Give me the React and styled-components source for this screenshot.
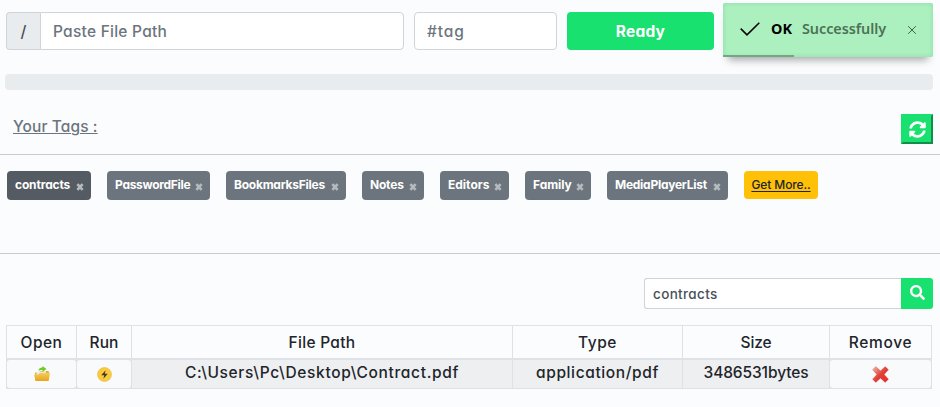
import React from 'react';
import styled, { createGlobalStyle, css } from 'styled-components';
import { FaSyncAlt, FaSearch } from 'react-icons/fa';

const Global = createGlobalStyle`
  * { box-sizing: border-box; }
  body {
    margin: 0;
    background: #fbfcfe;
    color: #212529;
    font-family: Inter, "Noto Sans", sans-serif;
    font-weight: 500;
    font-size: 15.5px;
    font-feature-settings: "cv11" 1;
  }
  button, input { font: inherit; font-feature-settings: inherit; }
`;

const tracked = css`letter-spacing: ${p => p.$track || 0}px;`;

const Page = styled.main`
  width: 940px;
  height: 407px;
  overflow: hidden;
`;
const TopBar = styled.header`
  display: flex;
  height: 74px;
  padding: 12px 7px 0 6px;
  align-items: flex-start;
`;
const PathGroup = styled.div`
  display: flex;
  width: 398px;
  height: 38px;
  margin-right: 10px;
`;
const Prefix = styled.span`
  display: flex;
  width: 34px;
  align-items: center;
  justify-content: center;
  background: #e9ecef;
  border: 1px solid #ced4da;
  border-right: 0;
  border-radius: 4px 0 0 4px;
  color: #495057;
  font-size: 16px;
`;
const Field = styled.input`
  flex: ${p => (p.$width ? 'none' : 1)};
  width: ${p => (p.$width ? `${p.$width}px` : 'auto')};
  min-width: 0;
  height: 38px;
  padding: 0 12px;
  border: 1px solid #ced4da;
  border-radius: ${p => (p.$joined ? '0 4px 4px 0' : '4px')};
  background: #fff;
  outline: 0;
  ${tracked}
  &::placeholder { color: #6c757d; opacity: 1; }
`;
const ReadyButton = styled.button`
  width: 147px;
  height: 38px;
  margin: 0 9px 0 10px;
  border: 0;
  border-radius: 4px;
  background: #19e170;
  color: #fff;
  font-weight: 700;
  letter-spacing: 0.2px;
`;
const Toast = styled.div`
  display: flex;
  position: relative;
  width: 210px;
  height: 54px;
  margin-top: -9px;
  padding: 0 16px 2px 17px;
  align-items: center;
  overflow: visible;
  border-radius: 2px;
  background: #acf0bf;
  box-shadow: inset 0 0 5px rgba(40, 150, 80, 0.22), 0 8px 8px -5px rgba(0, 0, 0, 0.34);
  font-family: "Noto Sans", sans-serif;
  font-size: 14.4px;
  &::after {
    content: "";
    position: absolute;
    left: 0;
    bottom: 0;
    width: 71px;
    height: 2px;
    background: #76a583;
  }
`;
const ToastTitle = styled.strong`
  width: 31px;
  margin: -2px 0 0 11px;
  color: #000;
  font-weight: 700;
`;
const ToastText = styled.span`
  flex: 1;
  margin-top: -2px;
  color: #4c7257;
  font-weight: 600;
  letter-spacing: -0.05px;
`;
const Progress = styled.div`
  height: 16px;
  margin: 0 7px 0 5px;
  border-radius: 4px;
  background: #e9ecef;
`;
const TagsHeader = styled.section`
  display: flex;
  height: 65px;
  padding: 24px 7px 0 13px;
  justify-content: space-between;
  border-bottom: 1px solid #c8cacc;
`;
const TagsTitle = styled.span`
  height: 25px;
  padding-top: 3px;
  color: #6c757d;
  line-height: 20px;
  letter-spacing: 0.1px;
  text-decoration: underline;
  text-decoration-thickness: 1px;
  text-underline-offset: 1px;
`;
const RefreshButton = styled.button`
  display: flex;
  width: 32px;
  height: 30px;
  padding: 0;
  align-items: center;
  justify-content: center;
  border: 2px solid;
  border-color: #19e170 #128c49 #128c49 #19e170;
  background: #19e170;
  color: #fff;
`;
const TagList = styled.section`
  display: flex;
  height: 99px;
  padding: 16px 7px 0;
  align-items: flex-start;
  gap: 16px;
  border-bottom: 1px solid #c8cacc;
`;
const Tag = styled.span`
  display: flex;
  width: ${p => p.$width}px;
  height: 29px;
  padding: 0 7px 2px 8px;
  align-items: center;
  justify-content: space-between;
  border-radius: 4px;
  background: ${p => (p.$active ? '#545b62' : '#6c757d')};
  color: #fff;
  font-size: 12px;
  font-weight: 700;
  white-space: nowrap;
  ${tracked}
`;
const MoreTag = styled.a`
  display: flex;
  width: 74px;
  height: 28px;
  padding-bottom: 1px;
  align-items: center;
  justify-content: center;
  border-radius: 4px;
  background: #ffc107;
  color: #212529;
  font-size: 12px;
  letter-spacing: -0.1px;
  text-decoration: underline;
  text-decoration-thickness: 1px;
  text-underline-offset: 2px;
`;
const TagClose = styled.svg`
  width: 8px;
  height: 8px;
  margin-top: 5px;
`;
const SearchRow = styled.form`
  display: flex;
  height: 71px;
  padding: 24px 7px 0;
  justify-content: flex-end;
`;
const SearchInput = styled.input`
  width: 257px;
  height: 31px;
  padding: 0 8px;
  border: 1px solid #ced4da;
  border-right: 0;
  border-radius: 3px 0 0 3px;
  background: #fff;
  color: #495057;
  font-size: 13.5px;
  letter-spacing: 0.35px;
  outline: 0;
`;
const SearchButton = styled.button`
  display: flex;
  width: 32px;
  height: 31px;
  padding: 0 0 2px;
  align-items: center;
  justify-content: center;
  border: 0;
  border-radius: 0 3px 3px 0;
  background: #19e170;
  color: #fff;
`;
const Table = styled.div`
  width: 926px;
  margin-left: 6px;
  padding: 1px;
  background: #dee2e6;
`;
const Row = styled.div`
  display: grid;
  grid-template-columns: 69px 54px 380px 169px 146px 101px;
  column-gap: 1px;
  height: ${p => p.$height}px;
  margin-bottom: ${p => p.$rule || 0}px;
`;
const Cell = styled.div`
  display: flex;
  padding-top: ${p => p.$shift || 0}px;
  padding-bottom: ${p => p.$lift || 0}px;
  align-items: center;
  justify-content: center;
  background: ${p => p.$fill || '#fbfcfe'};
  border-radius: ${p => (p.$round ? '3px' : 0)};
  white-space: nowrap;
  ${tracked}
`;

const CloseMark = () => (
  <TagClose viewBox="0 0 7 7">
    <path d="M1.2 1 5.8 6M5.8 1 1.2 6" stroke="#b5babe" strokeWidth="2.3" />
  </TagClose>
);
const CheckIcon = () => (
  <svg width="20" height="14" viewBox="0 0 20 14" fill="none">
    <path d="M.7 6.6 7 12.9 19.3.7" stroke="#000" strokeWidth="1.5" />
  </svg>
);
const DismissIcon = () => (
  <svg width="10" height="10" viewBox="0 0 10 10">
    <path d="M1.2 2.2 8.8 9.8M8.8 2.2 1.2 9.8" stroke="#3f6349" strokeWidth="1" />
  </svg>
);
const FolderIcon = () => (
  <svg width="16" height="16" viewBox="0 0 16 16">
    <defs>
      <linearGradient id="folder" x2="0" y2="1">
        <stop stopColor="#f8cc58" /><stop offset="1" stopColor="#e4a51d" />
      </linearGradient>
    </defs>
    <path d="M1.2 6.2h4l1-1.2h8.5v9H1.2z" fill="#d8a73a" />
    <path d="m2.3 6 9.5-1 .9 3.5-10 1z" fill="#e9eef2" />
    <path d="M1.4 15 .2 8.6h4l1.7-1.8H16l-1.4 8.2z" fill="url(#folder)" />
    <path d="M4.2 4.8C5 1.8 7 1.3 8.5 1.5V0l4 2.9-4 3V4C7 3.7 5.5 4 4.2 4.8z" fill="#73cc26" />
  </svg>
);
const RunIcon = () => (
  <svg width="15" height="15" viewBox="0 0 15 15">
    <circle cx="7.5" cy="7.5" r="7" fill="#fdca38" stroke="#dfba54" strokeWidth=".6" />
    <path d="M8.6 3.2 4.2 8.2h3L6.4 11.8 10.8 6.8H7.8z" fill="#3e3b38" />
  </svg>
);
const RemoveIcon = () => (
  <svg width="17" height="17" viewBox="0 0 17 17">
    <defs>
      <linearGradient id="cross" x2="1" y2="1">
        <stop stopColor="#f4beb3" /><stop offset=".5" stopColor="#df4038" /><stop offset="1" stopColor="#ee2929" />
      </linearGradient>
    </defs>
    <path d="m3.8.5 4.7 4.2L13.2.5l3.3 3.2-4.3 4.7 4.3 4.8-3.3 3.2-4.7-4.2-4.7 4.2-3.3-3.2 4.3-4.8L.5 3.7z"
      fill="url(#cross)" stroke="#c9473e" strokeOpacity=".45" strokeWidth=".6" />
  </svg>
);

const tags = [
  ['contracts', 84, -0.15, true],
  ['PasswordFile', 103, -0.3],
  ['BookmarksFiles', 120, -0.24],
  ['Notes', 62, -0.2],
  ['Editors', 69, 0],
  ['Family', 66, -0.05],
  ['MediaPlayerList', 121, -0.26],
];
const columns = [
  ['Open', 0.5], ['Run', 0.1], ['File Path', 0.3], ['Type', 0.55], ['Size', -0.1], ['Remove', 0.7],
];
const stripe = '#eeeff1';
const action = '#f9fafb';

export default function App() {
  return (
    <Page>
      <Global />
      <TopBar>
        <PathGroup>
          <Prefix>/</Prefix>
          <Field $joined $track={0.25} placeholder="Paste File Path" />
        </PathGroup>
        <Field $width={143} $track={0.9} placeholder="#tag" />
        <ReadyButton>Ready</ReadyButton>
        <Toast>
          <CheckIcon />
          <ToastTitle>OK</ToastTitle>
          <ToastText>Successfully</ToastText>
          <DismissIcon />
        </Toast>
      </TopBar>
      <Progress />
      <TagsHeader>
        <TagsTitle>Your Tags :</TagsTitle>
        <RefreshButton type="button"><FaSyncAlt size={17} /></RefreshButton>
      </TagsHeader>
      <TagList>
        {tags.map(([name, width, track, active]) => (
          <Tag key={name} $width={width} $track={track} $active={active}>
            {name}
            <CloseMark />
          </Tag>
        ))}
        <MoreTag>Get More..</MoreTag>
      </TagList>
      <SearchRow>
        <SearchInput defaultValue="contracts" />
        <SearchButton type="button"><FaSearch size={15} /></SearchButton>
      </SearchRow>
      <Table>
        <Row $height={32} $rule={2}>
          {columns.map(([label, track]) => (
            <Cell key={label} $track={track} $shift={1}>{label}</Cell>
          ))}
        </Row>
        <Row $height={28}>
          <Cell $fill={action} $round><FolderIcon /></Cell>
          <Cell $fill={action} $round><RunIcon /></Cell>
          <Cell $fill={stripe} $track={0.67} $lift={3}>C:\Users\Pc\Desktop\Contract.pdf</Cell>
          <Cell $fill={stripe} $track={0.62} $lift={3}>application/pdf</Cell>
          <Cell $fill={stripe} $track={-0.1} $lift={3}>3486531bytes</Cell>
          <Cell $fill={action} $round><RemoveIcon /></Cell>
        </Row>
      </Table>
    </Page>
  );
}
